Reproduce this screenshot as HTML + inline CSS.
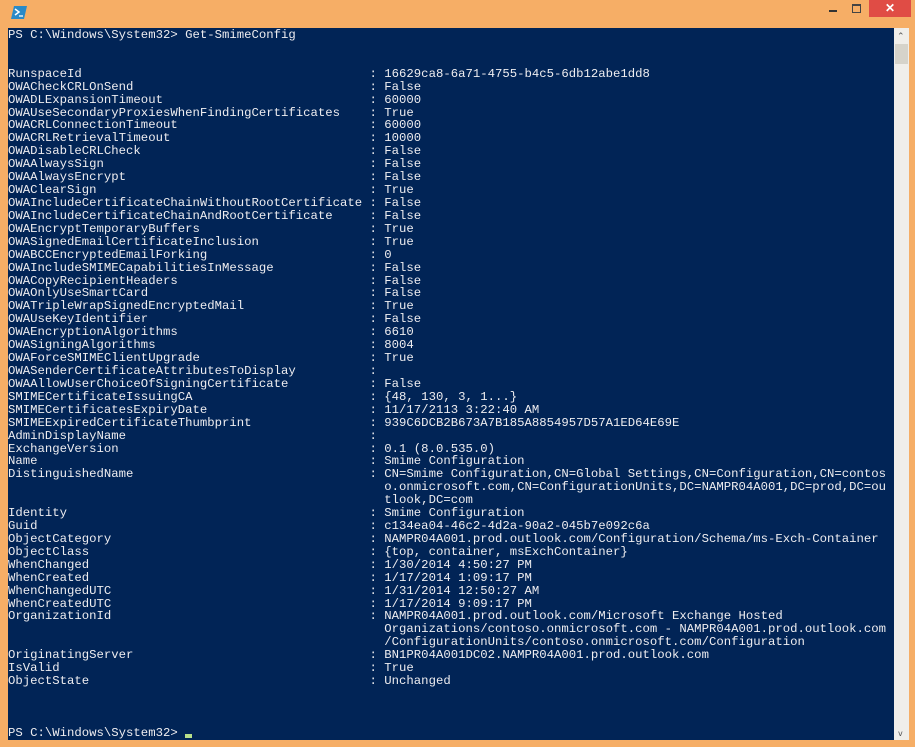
<!DOCTYPE html>
<html><head><meta charset="utf-8"><style>
html,body{margin:0;padding:0;width:915px;height:747px;overflow:hidden;background:#f6ae66;}
#con{position:absolute;left:8px;top:28px;width:886px;height:712px;background:#012456;overflow:hidden;}
pre{margin:0;position:absolute;left:0;top:1px;font-family:"Liberation Mono",monospace;font-size:12.3px;line-height:12.92px;color:#eeedf0;letter-spacing:-0.001px;}
#sb{position:absolute;left:894px;top:28px;width:15px;height:712px;background:#f0eeea;}
#thumb{position:absolute;left:1px;top:16px;width:13px;height:20px;background:#d6d3ca;}
.cur{display:inline-block;width:7px;height:4px;background:#b8e08a;vertical-align:-2px;}
#close{position:absolute;left:869px;top:0;width:42px;height:17px;background:#e04c45;color:#fff;font:bold 12px "Liberation Sans",sans-serif;text-align:center;line-height:17px;}
</style></head><body>
<svg style="position:absolute;left:11px;top:6px" width="16" height="13" viewBox="0 0 16 13"><polygon points="3,0 16,0 13,13 0,13" fill="#2a8ac8"/><polyline points="4,3 8,6 4,9" stroke="#fff" stroke-width="1.5" fill="none"/><line x1="8" y1="10" x2="12" y2="10" stroke="#fff" stroke-width="1.3"/></svg>
<div style="position:absolute;left:829px;top:10px;width:8px;height:2px;background:#333"></div>
<div style="position:absolute;left:852px;top:4px;width:7px;height:6px;border:1px solid #444;border-top-width:2px"></div>
<div id="close">✕</div>
<div id="con"><pre>PS C:\Windows\System32&gt; Get-SmimeConfig


RunspaceId                                       : 16629ca8-6a71-4755-b4c5-6db12abe1dd8
OWACheckCRLOnSend                                : False
OWADLExpansionTimeout                            : 60000
OWAUseSecondaryProxiesWhenFindingCertificates    : True
OWACRLConnectionTimeout                          : 60000
OWACRLRetrievalTimeout                           : 10000
OWADisableCRLCheck                               : False
OWAAlwaysSign                                    : False
OWAAlwaysEncrypt                                 : False
OWAClearSign                                     : True
OWAIncludeCertificateChainWithoutRootCertificate : False
OWAIncludeCertificateChainAndRootCertificate     : False
OWAEncryptTemporaryBuffers                       : True
OWASignedEmailCertificateInclusion               : True
OWABCCEncryptedEmailForking                      : 0
OWAIncludeSMIMECapabilitiesInMessage             : False
OWACopyRecipientHeaders                          : False
OWAOnlyUseSmartCard                              : False
OWATripleWrapSignedEncryptedMail                 : True
OWAUseKeyIdentifier                              : False
OWAEncryptionAlgorithms                          : 6610
OWASigningAlgorithms                             : 8004
OWAForceSMIMEClientUpgrade                       : True
OWASenderCertificateAttributesToDisplay          :
OWAAllowUserChoiceOfSigningCertificate           : False
SMIMECertificateIssuingCA                        : {48, 130, 3, 1...}
SMIMECertificatesExpiryDate                      : 11/17/2113 3:22:40 AM
SMIMEExpiredCertificateThumbprint                : 939C6DCB2B673A7B185A8854957D57A1ED64E69E
AdminDisplayName                                 :
ExchangeVersion                                  : 0.1 (8.0.535.0)
Name                                             : Smime Configuration
DistinguishedName                                : CN=Smime Configuration,CN=Global Settings,CN=Configuration,CN=contos
                                                   o.onmicrosoft.com,CN=ConfigurationUnits,DC=NAMPR04A001,DC=prod,DC=ou
                                                   tlook,DC=com
Identity                                         : Smime Configuration
Guid                                             : c134ea04-46c2-4d2a-90a2-045b7e092c6a
ObjectCategory                                   : NAMPR04A001.prod.outlook.com/Configuration/Schema/ms-Exch-Container
ObjectClass                                      : {top, container, msExchContainer}
WhenChanged                                      : 1/30/2014 4:50:27 PM
WhenCreated                                      : 1/17/2014 1:09:17 PM
WhenChangedUTC                                   : 1/31/2014 12:50:27 AM
WhenCreatedUTC                                   : 1/17/2014 9:09:17 PM
OrganizationId                                   : NAMPR04A001.prod.outlook.com/Microsoft Exchange Hosted
                                                   Organizations/contoso.onmicrosoft.com - NAMPR04A001.prod.outlook.com
                                                   /ConfigurationUnits/contoso.onmicrosoft.com/Configuration
OriginatingServer                                : BN1PR04A001DC02.NAMPR04A001.prod.outlook.com
IsValid                                          : True
ObjectState                                      : Unchanged



PS C:\Windows\System32&gt; <span class="cur"></span></pre></div>
<div id="sb"><div style="position:absolute;left:3px;top:4px;font:9px 'DejaVu Sans',sans-serif;color:#555">&#8963;</div><div id="thumb"></div><div style="position:absolute;left:4px;bottom:2px;font:8px 'DejaVu Sans',sans-serif;color:#555">v</div></div>
</body></html>
